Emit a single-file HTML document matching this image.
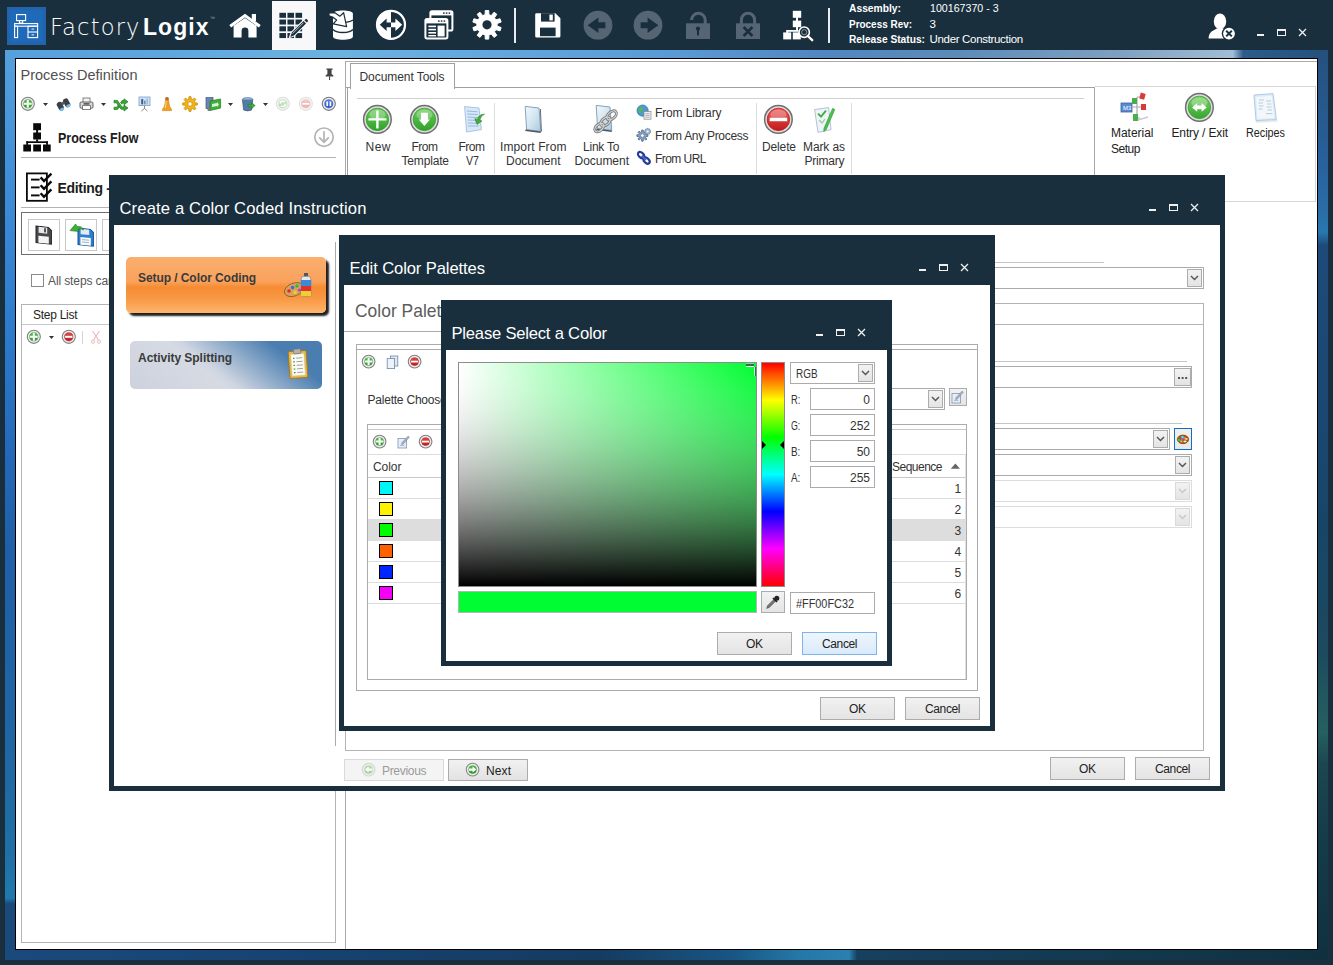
<!DOCTYPE html>
<html lang="en"><head><meta charset="utf-8"><title>FactoryLogix</title>
<style>
html,body{margin:0;padding:0}
body{width:1333px;height:965px;position:relative;overflow:hidden;background:#1a2f3e;font-family:"Liberation Sans",sans-serif;font-size:12px}
div,span,svg{position:absolute;box-sizing:content-box}
.t{white-space:nowrap}
svg{overflow:visible}
</style></head>
<body>
<div style="left:5px;top:50px;width:1323px;height:9px;background:linear-gradient(90deg,#56a0dc 0%,#5fa6de 12%,#6db3e0 25%,#62a6dc 38%,#5b9bd5 50%,#5187c0 62%,#5d8bb8 72%,#7ea0c0 84%,#a2bdd4 92.8%,#2d5c8a 93.6%,#25507c 100%)"></div>
<div style="left:5px;top:50px;width:11px;height:910px;background:linear-gradient(180deg,#56a0dc 0%,#3f8ed8 14%,#2f7fcf 28%,#2368b8 45%,#1f5fa8 55%,#1f66a4 75%,#1f6fa6 88%,#2079ad 93.2%,#1a4a7c 93.8%,#1a4a7c 100%)"></div>
<div style="left:1317px;top:50px;width:11px;height:910px;background:linear-gradient(180deg,#25507c 0%,#28609a 12%,#2a6ea6 18%,#2878b0 20%,#1d4a78 21.5%,#1b4872 40%,#184566 52%,#1d4a5e 66%,#256060 75%,#1c4650 78.5%,#153a48 88%,#10303f 100%)"></div>
<div style="left:5px;top:949px;width:1323px;height:11px;background:linear-gradient(90deg,#1a4a7c 0%,#164270 25%,#153b60 45%,#185684 55%,#2478a8 60%,#2a80b0 63.8%,#17405e 64.4%,#143a52 80%,#10303f 100%)"></div>
<div style="left:15px;top:58px;width:1301px;height:890px;border:1px solid #000;background:#fff"></div>
<div style="left:7px;top:7px;width:39px;height:38px;background:#2363ab"></div>
<div style="left:10px;top:10px;width:33px;height:32px;background:#1e6ab8"></div>
<svg style="left:7px;top:7px;" width="39" height="38" viewBox="0 0 39 38"><g fill="none" stroke="#fff" stroke-width="1.1">
<rect x="9.6" y="7.6" width="9" height="6"/><path d="M12.5 13.6v2.4h3.2v-2.4"/>
<rect x="7.6" y="16.6" width="23" height="2.6"/>
<rect x="7.6" y="19.2" width="3" height="11.4"/>
<rect x="21" y="19.2" width="9.6" height="11.4"/><path d="M21 25h9.6"/></g>
<rect x="24.5" y="21.5" width="2.6" height="1.2" fill="#cfe0f4"/><rect x="24.5" y="27.2" width="2.6" height="1.2" fill="#cfe0f4"/></svg>
<span class="t" style="left:50px;top:14px;font-size:22.6px;line-height:26px;color:#fff;letter-spacing:1.158px;font-family:'DejaVu Sans','Liberation Sans',sans-serif;font-weight:200;">Factory</span>
<span class="t" style="left:143px;top:14px;font-size:23px;line-height:26px;font-weight:bold;color:#fff;letter-spacing:1.043px;">Logix</span>
<span class="t" style="left:210px;top:15px;font-size:5px;line-height:6px;color:#9ab;">™</span>
<svg style="left:228px;top:10px;" width="34" height="30" viewBox="0 0 34 30"><path d="M2.2 16.2 L17 5.6 L31.8 16.2" fill="none" stroke="#fff" stroke-width="3"/>
<rect x="23.8" y="4" width="4.2" height="7" fill="#fff"/>
<path d="M5.6 15.8 L17 8 L28.6 15.8 V27.6 H20.4 V21 a3.4 3.4 0 0 0 -6.8 0 V27.6 H5.6Z" fill="#fff"/></svg>
<div style="left:272px;top:1px;width:44px;height:49px;background:#f8f8fa"></div>
<svg style="left:272px;top:1px;" width="44" height="49" viewBox="0 0 44 49"><rect x="7.40" y="11.80" width="6.6" height="5" fill="#1a2f3e"/><rect x="15.45" y="11.80" width="6.6" height="5" fill="#1a2f3e"/><rect x="23.50" y="11.80" width="6.6" height="5" fill="#1a2f3e"/><rect x="7.40" y="18.55" width="6.6" height="5" fill="#1a2f3e"/><rect x="15.45" y="18.55" width="6.6" height="5" fill="#1a2f3e"/><rect x="23.50" y="18.55" width="6.6" height="5" fill="#1a2f3e"/><rect x="7.40" y="25.30" width="6.6" height="5" fill="#1a2f3e"/><rect x="15.45" y="25.30" width="6.6" height="5" fill="#1a2f3e"/><rect x="23.50" y="25.30" width="6.6" height="5" fill="#1a2f3e"/><rect x="7.40" y="32.05" width="6.6" height="5" fill="#1a2f3e"/><rect x="15.45" y="32.05" width="6.6" height="5" fill="#1a2f3e"/><rect x="23.50" y="32.05" width="6.6" height="5" fill="#1a2f3e"/><path d="M16.5 37.5 L18.6 31.2 L32.2 17.8 L36.2 21.8 L22.6 35.2 Z" fill="#f8f8fa"/>
<path d="M18.3 36 L19.9 31.6 L31.6 20 L34 22.4 L22.3 34.2 Z M32.4 19.2 L33.4 18.2 a1 1 0 0 1 1.4 0 L35.8 19.2 a1 1 0 0 1 0 1.4 L34.8 21.6Z" fill="#1a2f3e"/>
<path d="M20.6 32.6 L31.4 21.8" stroke="#f8f8fa" stroke-width=".7"/></svg>
<svg style="left:327px;top:8px;" width="30" height="34" viewBox="0 0 30 34"><path d="M6 5.6 C6 1.4 25.9 1.4 25.9 5.6 V28.4 C25.9 32.8 6 32.8 6 28.4Z" fill="#fff"/>
<path d="M6 21.4 C9 25.6 23 25.6 25.9 21.4" fill="none" stroke="#1a2f3e" stroke-width="1.6"/>
<path d="M17 14.4 C21 14.2 24 13.4 25.9 12" fill="none" stroke="#1a2f3e" stroke-width="1.3"/>
<path d="M2 4.9 L7.6 4.6 L12.8 8.2 L16.6 4.7 L19.6 18.6 L6.2 15.8 L9.6 12 L6.2 9.4 L2 7.9Z" fill="#fff" stroke="#1a2f3e" stroke-width="1.2" stroke-linejoin="round"/></svg>
<svg style="left:375px;top:9px;" width="32" height="32" viewBox="0 0 32 32"><circle cx="16" cy="15.8" r="14" fill="none" stroke="#fff" stroke-width="2.2"/>
<path d="M16 2 A13.8 13.8 0 0 0 16 29.6Z" fill="#fff"/>
<path d="M4.8 15.8 L11.6 9.6 V13.4 H16 V18.2 H11.6 V22Z" fill="#1a2f3e"/>
<path d="M27.2 15.8 L20.4 9.6 V13.4 H16 V18.2 H20.4 V22Z" fill="#fff"/></svg>
<svg style="left:423px;top:9px;" width="32" height="32" viewBox="0 0 32 32"><rect x="7.4" y="2.2" width="22" height="19.4" rx="1.6" fill="#1a2f3e" stroke="#fff" stroke-width="2"/>
<rect x="7.4" y="2.2" width="22" height="4.2" fill="#fff"/>
<rect x="2.4" y="10" width="22" height="19.4" rx="1.6" fill="#1a2f3e" stroke="#fff" stroke-width="2"/>
<rect x="2.4" y="10" width="22" height="4.4" fill="#fff"/>
<g fill="#1a2f3e"><rect x="20" y="3.4" width="1.6" height="1.4"/><rect x="22.8" y="3.4" width="1.6" height="1.4"/><rect x="25.6" y="3.4" width="1.6" height="1.4"/>
<rect x="15" y="11.4" width="1.6" height="1.4"/><rect x="17.8" y="11.4" width="1.6" height="1.4"/><rect x="20.6" y="11.4" width="1.6" height="1.4"/></g>
<g fill="#fff"><rect x="5.4" y="16.6" width="7.6" height="1.6"/><rect x="5.4" y="19.8" width="7.6" height="1.6"/><rect x="5.4" y="23" width="7.6" height="1.6"/><rect x="5.4" y="26" width="7.6" height="1.4"/><rect x="14.6" y="16.6" width="7" height="10.8"/></g></svg>
<svg style="left:471px;top:9px;" width="32" height="32" viewBox="0 0 32 32"><polygon points="14.07,5.78 14.28,1.50 17.72,1.50 17.93,5.78 20.33,6.56 23.01,3.22 25.80,5.25 23.45,8.83 24.93,10.87 29.06,9.74 30.13,13.02 26.12,14.54 26.12,17.06 30.13,18.58 29.06,21.86 24.93,20.73 23.45,22.77 25.80,26.35 23.01,28.38 20.33,25.04 17.93,25.82 17.72,30.10 14.28,30.10 14.07,25.82 11.67,25.04 8.99,28.38 6.20,26.35 8.55,22.77 7.07,20.73 2.94,21.86 1.87,18.58 5.88,17.06 5.88,14.54 1.87,13.02 2.94,9.74 7.07,10.87 8.55,8.83 6.20,5.25 8.99,3.22 11.67,6.56" fill="#fff" stroke="#fff" stroke-width="1" stroke-linejoin="round"/><circle cx="16" cy="15.8" r="4.6" fill="#1a2f3e"/></svg>
<div style="left:514px;top:8px;width:2px;height:35px;background:#e8ecf0"></div>
<svg style="left:534px;top:12px;" width="28" height="27" viewBox="0 0 28 27"><path d="M1.2 2.6 a1.4 1.4 0 0 1 1.4 -1.4 H21.4 L26.4 6.2 V24.2 a1.4 1.4 0 0 1 -1.4 1.4 H2.6 a1.4 1.4 0 0 1 -1.4 -1.4Z" fill="#fff"/>
<rect x="7" y="1.2" width="13.6" height="8.4" fill="#1a2f3e"/><rect x="15.4" y="2.6" width="3.4" height="5.8" fill="#fff"/>
<rect x="6" y="15.6" width="15.6" height="8.6" fill="#1a2f3e"/></svg>
<svg style="left:583px;top:10px;" width="30" height="30" viewBox="0 0 30 30"><circle cx="15" cy="15.2" r="14.4" fill="#566573"/><path d="M4.6 15.2 L15.4 7.4 V12.2 H22.4 V18.2 H15.4 V23Z" fill="#1a2f3e"/></svg>
<svg style="left:633px;top:10px;" width="30" height="30" viewBox="0 0 30 30"><circle cx="15" cy="15.2" r="14.4" fill="#566573"/><path d="M25.4 15.2 L14.6 7.4 V12.2 H7.6 V18.2 H14.6 V23Z" fill="#1a2f3e"/></svg>
<svg style="left:685px;top:10px;" width="26" height="30" viewBox="0 0 26 30"><path d="M6.6 10 a6.8 6.8 0 0 1 13.6 0 V14" fill="none" stroke="#566573" stroke-width="3"/>
<rect x="1" y="13.3" width="24" height="15.7" fill="#566573"/>
<circle cx="13" cy="18.6" r="2.2" fill="#1a2f3e"/><rect x="12" y="19" width="2" height="6.4" fill="#1a2f3e"/></svg>
<svg style="left:735px;top:10px;" width="26" height="30" viewBox="0 0 26 30"><path d="M6.4 14 V9.8 a6.6 6.6 0 0 1 13.2 0 V14" fill="none" stroke="#566573" stroke-width="3"/>
<rect x="1" y="13.3" width="24" height="15.7" fill="#566573"/>
<path d="M8.6 17 L17.4 26 M17.4 17 L8.6 26" stroke="#1a2f3e" stroke-width="2.6"/></svg>
<svg style="left:782px;top:9px;" width="32" height="33" viewBox="0 0 32 33"><g fill="#fff"><rect x="10.8" y="1.8" width="8.4" height="7"/><rect x="14" y="8" width="2" height="4"/><rect x="10.8" y="11.6" width="8.4" height="6.6"/><rect x="14" y="18" width="2" height="4"/>
<rect x="4.4" y="21" width="12" height="1.8"/><rect x="4.4" y="21" width="1.8" height="3"/>
<rect x="1.2" y="23.4" width="8" height="7"/><rect x="10.8" y="23.4" width="8" height="7"/></g>
<circle cx="22.2" cy="23.2" r="5.2" fill="#1a2f3e" stroke="#fff" stroke-width="1.6"/><circle cx="22.2" cy="23.2" r="2.6" fill="none" stroke="#fff" stroke-width=".8" opacity=".6"/>
<path d="M25.8 27 L30.2 31.2" stroke="#fff" stroke-width="2.4" stroke-linecap="round"/></svg>
<div style="left:828px;top:8px;width:2px;height:35px;background:#e8ecf0"></div>
<span class="t" style="left:849px;top:2px;font-size:11.5px;line-height:12px;font-weight:bold;color:#fff;transform:scaleX(0.8940);transform-origin:0 0;">Assembly:</span>
<span class="t" style="left:849px;top:18px;font-size:11.5px;line-height:12px;font-weight:bold;color:#fff;transform:scaleX(0.8645);transform-origin:0 0;">Process Rev:</span>
<span class="t" style="left:849px;top:33px;font-size:11.5px;line-height:12px;font-weight:bold;color:#fff;transform:scaleX(0.8873);transform-origin:0 0;">Release Status:</span>
<span class="t" style="left:929.5px;top:2px;font-size:11.5px;line-height:12px;color:#fff;transform:scaleX(0.9248);transform-origin:0 0;">100167370 - 3</span>
<span class="t" style="left:929.5px;top:18px;font-size:11.5px;line-height:12px;color:#fff;">3</span>
<span class="t" style="left:929.5px;top:33px;font-size:11.5px;line-height:12px;color:#fff;letter-spacing:-0.322px;">Under Construction</span>
<svg style="left:1207px;top:12px;" width="32" height="30" viewBox="0 0 32 30"><ellipse cx="13" cy="9.4" rx="6.2" ry="8" fill="#fff"/>
<path d="M1.6 26.6 C1.6 19 7 18.6 9.6 16.4 H16.4 C19 18.6 24.4 19 24.4 26.6Z" fill="#fff"/>
<circle cx="22" cy="21.6" r="6.6" fill="#fff" stroke="#1a2f3e" stroke-width="1.4"/>
<path d="M19.2 18.8 L24.8 24.4 M24.8 18.8 L19.2 24.4" stroke="#1a2f3e" stroke-width="2"/></svg>
<div style="left:1257px;top:34px;width:7px;height:2px;background:#f0f0f0"></div>
<div style="left:1277px;top:29px;width:7px;height:4px;border:1px solid #f0f0f0;border-top-width:2px"></div>
<svg style="left:1298px;top:28px;" width="9" height="9" viewBox="0 0 9 9"><path d="M1 1 L8 8 M8 1 L1 8" stroke="#f0f0f0" stroke-width="1.3"/></svg>
<span class="t" style="left:20.5px;top:67px;font-size:14.5px;line-height:16px;color:#505050;letter-spacing:0.008px;">Process Definition</span>
<svg style="left:324px;top:67px;" width="11" height="14" viewBox="0 0 11 14"><path d="M2.4 1.6 H8.6 V2.8 H7.6 V7 L9.4 8.6 V9.4 H1.6 V8.6 L3.4 7 V2.8 H2.4Z" fill="#444"/><rect x="5" y="9.4" width="1.1" height="3.6" fill="#444"/></svg>
<svg style="left:20.0px;top:96.2px;" width="15.6" height="15.6" viewBox="0 0 15.6 15.6"><defs><linearGradient id="g278_1040" x1="0" y1="0" x2="0" y2="1"><stop offset="0" stop-color="#58c04e"/><stop offset="1" stop-color="#2c9a26"/></linearGradient></defs><circle cx="7.8" cy="7.8" r="6.55" fill="#ececec" stroke="#808080" stroke-width="1.1"/><circle cx="7.8" cy="7.8" r="4.08" fill="url(#g278_1040)" stroke="#2c9a26" stroke-width=".6"/><path d="M3.92 7.8 H11.68 M7.8 3.92 V11.68" stroke="#fff" stroke-width="2.00"/></svg>
<svg style="left:42.5px;top:102.5px;" width="5" height="3" viewBox="0 0 5 3"><path d="M0 0 H5 L2.5 3Z" fill="#333"/></svg>
<svg style="left:56px;top:97px;" width="15" height="14" viewBox="0 0 15 14"><g transform="rotate(-28 7.5 7)"><rect x="1" y="3" width="5.4" height="9" rx="2.4" fill="#3a3f48"/><rect x="8.2" y="3" width="5.4" height="9" rx="2.4" fill="#3a3f48"/><rect x="5.6" y="4.6" width="3.4" height="3" fill="#555"/>
<ellipse cx="3.7" cy="11" rx="2.4" ry="1.5" fill="#7ab8e8"/><ellipse cx="10.9" cy="11" rx="2.4" ry="1.5" fill="#7ab8e8"/></g></svg>
<svg style="left:79px;top:97px;" width="15" height="14" viewBox="0 0 15 14"><rect x="4" y="1" width="7" height="4.6" fill="#f4f4f4" stroke="#666" stroke-width=".8"/><rect x="1" y="5" width="13" height="6.2" rx="1.2" fill="#d8d8dc" stroke="#555" stroke-width=".9"/><rect x="3.6" y="8.6" width="7.8" height="4" fill="#fff" stroke="#666" stroke-width=".8"/><rect x="4.6" y="6.2" width="5.8" height="1.4" fill="#444"/></svg>
<svg style="left:100.5px;top:102.5px;" width="5" height="3" viewBox="0 0 5 3"><path d="M0 0 H5 L2.5 3Z" fill="#333"/></svg>
<svg style="left:113px;top:96px;" width="16" height="16" viewBox="0 0 16 16"><path d="M1 4.4 H4.4 L9 11 H11 V9 L15 12 L11 15 V13.2 H8 L3.4 6.8 H1Z M1 11.2 H3.6 L5 9.4 L6.4 11.2 L4.4 13.6 H1Z M7.6 6.6 L9 4.6 H11 V2.8 L15 5.8 L11 8.8 V7 H9.6 L8.8 8.2Z" fill="#3aa836" stroke="#1c7a1c" stroke-width=".7"/></svg>
<svg style="left:138px;top:96px;" width="13" height="16" viewBox="0 0 13 16"><rect x="1" y="1" width="11" height="8.6" fill="#cfe4f6" stroke="#7d9ec0" stroke-width=".8"/><rect x="3.2" y="3" width="2" height="5.4" fill="#3f5f86"/><rect x="6" y="4.6" width="1.6" height="3.8" fill="#6b8db8"/><rect x="8.4" y="2.4" width="1.6" height="6" fill="#9cb9d8"/><path d="M6.5 9.6 V13 M6.5 12.4 L3.4 15.2 M6.5 12.4 L9.6 15.2" stroke="#8a8a8a" stroke-width="1"/></svg>
<svg style="left:161px;top:96px;" width="12" height="16" viewBox="0 0 12 16"><circle cx="6" cy="2.8" r="1.9" fill="#b8691c"/><path d="M4.6 4 H7.4 L8.6 10.4 L10.6 13.4 V14.6 H1.4 V13.4 L3.4 10.4Z" fill="#f0a020" stroke="#c77810" stroke-width=".6"/><path d="M5.2 5 L4.4 12" stroke="#ffd98a" stroke-width="1"/></svg>
<svg style="left:182px;top:96px;" width="16" height="16" viewBox="0 0 16 16"><polygon points="13.05,6.76 15.33,6.97 15.33,9.03 13.05,9.24 12.45,10.70 13.91,12.45 12.45,13.91 10.70,12.45 9.24,13.05 9.03,15.33 6.97,15.33 6.76,13.05 5.30,12.45 3.55,13.91 2.09,12.45 3.55,10.70 2.95,9.24 0.67,9.03 0.67,6.97 2.95,6.76 3.55,5.30 2.09,3.55 3.55,2.09 5.30,3.55 6.76,2.95 6.97,0.67 9.03,0.67 9.24,2.95 10.70,3.55 12.45,2.09 13.91,3.55 12.45,5.30" fill="#f2b418" stroke="#c48a08" stroke-width=".8" stroke-linejoin="round"/><circle cx="8" cy="8" r="2.2" fill="#fff" stroke="#c48a08" stroke-width=".7"/></svg>
<svg style="left:205px;top:96px;" width="17" height="16" viewBox="0 0 17 16"><rect x="1" y="1.6" width="7" height="11" fill="#6a86ac" stroke="#3d5a80" stroke-width=".7"/><path d="M5 5 L15.6 3 V12 L5 14.6Z" fill="#3fae3a" stroke="#1f7a1f" stroke-width=".7"/><path d="M7 8 L12 7 V6 L14 8.4 L12 11 V10 L7 11Z" fill="#d6f5d0"/><circle cx="4" cy="13.4" r="1.6" fill="#777"/></svg>
<svg style="left:227.5px;top:102.5px;" width="5" height="3" viewBox="0 0 5 3"><path d="M0 0 H5 L2.5 3Z" fill="#333"/></svg>
<svg style="left:241px;top:96px;" width="15" height="16" viewBox="0 0 15 16"><ellipse cx="6.6" cy="3.4" rx="5.2" ry="1.8" fill="#9fc2e6" stroke="#4f6f92" stroke-width=".7"/><path d="M1.4 3.6 L2.6 14 Q6.6 15.8 10.6 14 L11.8 3.6" fill="#547aa6" stroke="#3a5878" stroke-width=".7"/><path d="M7 8.4 H10.6 V6.6 L14.2 9.6 L10.6 12.6 V10.8 H7Z" fill="#3fae3a" stroke="#1f7a1f" stroke-width=".5"/></svg>
<svg style="left:262.5px;top:102.5px;" width="5" height="3" viewBox="0 0 5 3"><path d="M0 0 H5 L2.5 3Z" fill="#333"/></svg>
<svg style="left:275.2px;top:96.2px;opacity:0.55;" width="15.6" height="15.6" viewBox="0 0 15.6 15.6"><defs><linearGradient id="g2830_1040" x1="0" y1="0" x2="0" y2="1"><stop offset="0" stop-color="#9fdc98"/><stop offset="1" stop-color="#74c06e"/></linearGradient></defs><circle cx="7.8" cy="7.8" r="6.55" fill="#ececec" stroke="#c4c4c4" stroke-width="1.1"/><circle cx="7.8" cy="7.8" r="4.08" fill="url(#g2830_1040)" stroke="#74c06e" stroke-width=".6"/><circle cx="7.8" cy="7.8" r="2.71" fill="none" stroke="#fff" stroke-width="1.60" stroke-dasharray="6.20 2.33"/></svg>
<svg style="left:298.2px;top:96.2px;opacity:0.5;" width="15.6" height="15.6" viewBox="0 0 15.6 15.6"><defs><linearGradient id="g3060_1040" x1="0" y1="0" x2="0" y2="1"><stop offset="0" stop-color="#f29a9a"/><stop offset="1" stop-color="#e06a6a"/></linearGradient></defs><circle cx="7.8" cy="7.8" r="6.55" fill="#ececec" stroke="#c4c4c4" stroke-width="1.1"/><circle cx="7.8" cy="7.8" r="4.08" fill="url(#g3060_1040)" stroke="#e06a6a" stroke-width=".6"/><rect x="3.92" y="6.60" width="7.75" height="2.40" fill="#fff" stroke="#b33" stroke-width=".4"/></svg>
<svg style="left:321.2px;top:96.2px;" width="15.6" height="15.6" viewBox="0 0 15.6 15.6"><defs><linearGradient id="g3290_1040" x1="0" y1="0" x2="0" y2="1"><stop offset="0" stop-color="#5a86e8"/><stop offset="1" stop-color="#2a52c8"/></linearGradient></defs><circle cx="7.8" cy="7.8" r="6.55" fill="#ececec" stroke="#777" stroke-width="1.1"/><circle cx="7.8" cy="7.8" r="4.08" fill="url(#g3290_1040)" stroke="#2a52c8" stroke-width=".6"/><rect x="5.40" y="5.47" width="1.63" height="4.65" fill="#fff"/><rect x="8.58" y="5.47" width="1.63" height="4.65" fill="#fff"/></svg>
<svg style="left:23px;top:122.5px;" width="28" height="29" viewBox="0 0 28 29"><g fill="#0a0a0a"><rect x="10.2" y="0.2" width="7.8" height="7"/><rect x="13.1" y="7" width="2" height="3"/><rect x="10.2" y="9.5" width="7.8" height="7"/><rect x="13.1" y="16.3" width="2" height="2.4"/>
<rect x="3.3" y="18.3" width="21.6" height="1.7"/><rect x="3.3" y="18.3" width="1.8" height="3.6"/><rect x="23.1" y="18.3" width="1.8" height="3.6"/>
<rect x="0.3" y="21.5" width="7.7" height="7"/><rect x="10.2" y="21.5" width="7.8" height="7"/><rect x="20" y="21.5" width="7.7" height="7"/></g></svg>
<span class="t" style="left:57.5px;top:130px;font-size:14px;line-height:16px;font-weight:bold;color:#1c1c1c;transform:scaleX(0.8919);transform-origin:0 0;">Process Flow</span>
<svg style="left:313px;top:127px;" width="22" height="21" viewBox="0 0 22 21"><circle cx="11" cy="10.2" r="9.2" fill="#fff" stroke="#b4b4b4" stroke-width="1.7"/><path d="M11 4.2 V15 M6.2 10.4 L11 15.2 L15.8 10.4" fill="none" stroke="#b4b4b4" stroke-width="1.7"/></svg>
<div style="left:21px;top:157px;width:315px;height:1px;background:#b4b4b4"></div>
<svg style="left:25px;top:172px;" width="28" height="31" viewBox="0 0 28 31"><rect x="1.9" y="1.4" width="20" height="27.4" fill="#fff" stroke="#0a0a0a" stroke-width="1.8"/>
<g stroke="#0a0a0a" stroke-width="1.9" fill="none"><path d="M6 7.6 H14.6"/><path d="M6 15.4 H14.6"/><path d="M6 23.4 H14.6"/>
<path d="M15.6 5.4 L19 9 L26.4 1.6" stroke-width="2.4"/><path d="M15.6 13.2 L19 16.8 L26.4 9.4" stroke-width="2.4"/><path d="M15.6 21.2 L19 24.8 L26.4 17.4" stroke-width="2.4"/></g></svg>
<span class="t" style="left:57.5px;top:180px;font-size:14px;line-height:16px;font-weight:bold;color:#1c1c1c;letter-spacing:-0.311px;">Editing -</span>
<div style="left:21px;top:207px;width:315px;height:1px;background:#b4b4b4"></div>
<div style="left:21px;top:212px;width:313px;height:41px;border:1px solid #6e6e6e;background:#fff;"></div>
<div style="left:28px;top:219px;width:30px;height:30px;border:1px solid #c8c8c8;background:#fff;"></div>
<div style="left:65px;top:219px;width:30px;height:30px;border:1px solid #c8c8c8;background:#fff;"></div>
<div style="left:102px;top:219px;width:30px;height:30px;border:1px solid #c8c8c8;background:#fff;"></div>
<svg style="left:35px;top:225px;" width="19" height="21" viewBox="0 0 19 21"><g transform="skewY(6)"><path d="M1 1 H13.4 L16.4 3.6 V17.4 H1Z" fill="#4a4a4e" stroke="#222" stroke-width="1"/><rect x="3.6" y="1.4" width="8.6" height="6" fill="#e8e8ec"/><rect x="9" y="2.2" width="2" height="4.2" fill="#555"/><rect x="3.4" y="10.4" width="10.4" height="7" fill="#f4f4f4"/></g></svg>
<svg style="left:69px;top:222px;" width="26" height="26" viewBox="0 0 26 26"><g transform="translate(8 5) skewY(6)"><path d="M1 1 H13.4 L16.4 3.6 V17.4 H1Z" fill="#2f7fd0" stroke="#1a4f90" stroke-width="1"/><rect x="3.6" y="1.4" width="8.6" height="5.4" fill="#dfeaf6"/><rect x="3.4" y="9.6" width="10.4" height="7.8" fill="#f4f8fc"/><path d="M5 12 H12 M5 14.4 H12" stroke="#9ab" stroke-width=".8"/></g>
<path d="M1 8.6 L6.6 2 L8 4.6 Q13 3.6 14.6 8 Q11.6 6.2 9 7.2 L10 9.6Z" fill="#3fae3a" stroke="#1f7a1f" stroke-width=".6"/></svg>
<div style="left:31px;top:274px;width:11px;height:11px;border:1px solid #8a8a8a;background:#fff;"></div>
<span class="t" style="left:48px;top:274px;font-size:12px;line-height:14px;color:#555;letter-spacing:-0.110px;">All steps can be performed</span>
<div style="left:21px;top:304px;width:313px;height:637px;border:1px solid #b4b4b4;background:#fff;"></div>
<span class="t" style="left:33px;top:308px;font-size:12px;line-height:14px;color:#222;letter-spacing:-0.274px;">Step List</span>
<div style="left:22px;top:324px;width:313px;height:1px;background:#c8c8c8"></div>
<svg style="left:25.999999999999996px;top:329.2px;" width="15.6" height="15.6" viewBox="0 0 15.6 15.6"><defs><linearGradient id="g338_3370" x1="0" y1="0" x2="0" y2="1"><stop offset="0" stop-color="#58c04e"/><stop offset="1" stop-color="#2c9a26"/></linearGradient></defs><circle cx="7.8" cy="7.8" r="6.55" fill="#ececec" stroke="#808080" stroke-width="1.1"/><circle cx="7.8" cy="7.8" r="4.08" fill="url(#g338_3370)" stroke="#2c9a26" stroke-width=".6"/><path d="M3.92 7.8 H11.68 M7.8 3.92 V11.68" stroke="#fff" stroke-width="2.00"/></svg>
<svg style="left:48.5px;top:335.5px;" width="5" height="3" viewBox="0 0 5 3"><path d="M0 0 H5 L2.5 3Z" fill="#333"/></svg>
<svg style="left:61.2px;top:329.2px;" width="15.6" height="15.6" viewBox="0 0 15.6 15.6"><defs><linearGradient id="g690_3370" x1="0" y1="0" x2="0" y2="1"><stop offset="0" stop-color="#e84a4a"/><stop offset="1" stop-color="#c01818"/></linearGradient></defs><circle cx="7.8" cy="7.8" r="6.55" fill="#ececec" stroke="#808080" stroke-width="1.1"/><circle cx="7.8" cy="7.8" r="4.08" fill="url(#g690_3370)" stroke="#c01818" stroke-width=".6"/><rect x="3.92" y="6.60" width="7.75" height="2.40" fill="#fff" stroke="#b33" stroke-width=".4"/></svg>
<div style="left:82px;top:331px;width:1px;height:13px;background:#d4d4d4"></div>
<svg style="left:90px;top:330px;" width="12" height="14" viewBox="0 0 12 14"><path d="M2.6 1 L8.4 10 M9.4 1 L3.6 10" stroke="#e8b8b8" stroke-width="1.1"/><circle cx="3" cy="11.6" r="1.6" fill="none" stroke="#e8b8b8" stroke-width="1"/><circle cx="9" cy="11.6" r="1.6" fill="none" stroke="#e8b8b8" stroke-width="1"/></svg>
<div style="left:345px;top:61px;width:971px;height:887px;border:1px solid #aaa;border-bottom:none;border-right:none;background:#fff"></div>
<div style="left:346px;top:87px;width:749px;height:1px;background:#a0a0a0"></div>
<div style="left:347px;top:87px;width:1px;height:115px;background:#a0a0a0"></div>
<div style="left:350px;top:63px;width:103px;height:25px;border:1px solid #a0a0a0;border-bottom:none;background:#fff"></div>
<span class="t" style="left:359.5px;top:70px;font-size:12px;line-height:14px;color:#333;letter-spacing:-0.063px;">Document Tools</span>
<div style="left:357px;top:98px;width:727px;height:1px;background:#d0d0d0"></div>
<svg style="left:361.8px;top:103.89999999999999px;" width="30.8" height="30.8" viewBox="0 0 30.8 30.8"><defs><linearGradient id="g3772_1193" x1="0" y1="0" x2="0" y2="1"><stop offset="0" stop-color="#6ccc5c"/><stop offset="1" stop-color="#2fa22a"/></linearGradient></defs><circle cx="15.4" cy="15.4" r="13.80" fill="#dedede" stroke="#6e6e6e" stroke-width="1.5"/><circle cx="15.4" cy="15.4" r="11.23" fill="url(#g3772_1193)" stroke="#2fa22a" stroke-width=".8"/><ellipse cx="15.4" cy="10.68" rx="8.09" ry="5.17" fill="#fff" opacity=".28"/><path d="M6.41 15.4 H24.39 M15.4 6.41 V24.39" stroke="#fff" stroke-width="2.40"/></svg>
<span class="t" style="left:365.5px;top:140px;font-size:12px;line-height:14px;color:#333;letter-spacing:0.497px;">New</span>
<svg style="left:409.1px;top:103.89999999999999px;" width="30.8" height="30.8" viewBox="0 0 30.8 30.8"><defs><linearGradient id="g4245_1193" x1="0" y1="0" x2="0" y2="1"><stop offset="0" stop-color="#6ccc5c"/><stop offset="1" stop-color="#2fa22a"/></linearGradient></defs><circle cx="15.4" cy="15.4" r="13.80" fill="#dedede" stroke="#6e6e6e" stroke-width="1.5"/><circle cx="15.4" cy="15.4" r="11.23" fill="url(#g4245_1193)" stroke="#2fa22a" stroke-width=".8"/><ellipse cx="15.4" cy="10.68" rx="8.09" ry="5.17" fill="#fff" opacity=".28"/><path d="M11.94 8.78 H18.86 V15.40 H21.02 L15.4 22.02 L9.78 15.4 H11.94Z" fill="#fff"/></svg>
<span class="t" style="left:411.5px;top:140px;font-size:12px;line-height:14px;color:#333;letter-spacing:-0.499px;">From</span>
<span class="t" style="left:401.5px;top:154px;font-size:12px;line-height:14px;color:#333;letter-spacing:-0.170px;">Template</span>
<svg style="left:462px;top:105px;" width="24" height="29" viewBox="0 0 24 29"><path d="M2.6 1.6 L17 3 L19.4 24.6 L4.6 27Z" fill="#d8e8f8" stroke="#9ab8dc" stroke-width=".8"/><path d="M5 6 L15.6 6.8 M5.2 9 L15.8 9.6 M5.4 12 L16 12.6 M5.6 15 L16.2 15.4 M5.8 18 L16.6 18.2 M6 21 L16.8 21" stroke="#8fb2dc" stroke-width=".9"/>
<path d="M22.6 9 Q16 9.6 15.4 14.4 L12.8 13.6 L15 19.4 L20 16 L17.6 15.2 Q18.4 11.6 22.6 9Z" fill="#3fae3a" stroke="#1f7a1f" stroke-width=".5"/></svg>
<span class="t" style="left:458.5px;top:140px;font-size:12px;line-height:14px;color:#333;letter-spacing:-0.499px;">From</span>
<span class="t" style="left:466px;top:154px;font-size:12px;line-height:14px;color:#333;transform:scaleX(0.8857);transform-origin:0 0;">V7</span>
<div style="left:494px;top:103px;width:1px;height:71px;background:#dcdcdc"></div>
<svg style="left:522px;top:105px;" width="22" height="30" viewBox="0 0 22 30"><defs><linearGradient id="dg1" x1="0" y1="0" x2="1" y2="1"><stop offset="0" stop-color="#f2f8fc"/><stop offset=".5" stop-color="#d4e6f0"/><stop offset="1" stop-color="#a8c8dc"/></linearGradient></defs><path d="M3.2 1.4 L17 3 L18.8 26.4 L4.6 24.6Z" fill="url(#dg1)" stroke="#7a98b0" stroke-width=".9"/><path d="M3.4 25.2 L18.8 27.2" stroke="#4a5866" stroke-width="1.6"/><path d="M18.4 4 L19.4 26.6" stroke="#5a6c7c" stroke-width="1"/></svg>
<span class="t" style="left:500px;top:140px;font-size:12px;line-height:14px;color:#333;letter-spacing:0.116px;">Import From</span>
<span class="t" style="left:506px;top:154px;font-size:12px;line-height:14px;color:#333;letter-spacing:-0.027px;">Document</span>
<svg style="left:590px;top:104px;" width="30" height="31" viewBox="0 0 30 31"><path d="M6.2 1.4 L20 3 L21.8 26.4 L7.6 24.6Z" fill="url(#dg1)" stroke="#7a98b0" stroke-width=".9"/><path d="M6.4 25.2 L21.8 27.2" stroke="#4a5866" stroke-width="1.4"/>
<g fill="none" stroke="#808080" stroke-width="3"><ellipse cx="21.6" cy="11.4" rx="5.6" ry="3.4" transform="rotate(-42 21.6 11.4)"/><ellipse cx="15.4" cy="17.6" rx="5.6" ry="3.4" transform="rotate(-42 15.4 17.6)"/><ellipse cx="9.2" cy="23.6" rx="5.2" ry="3.2" transform="rotate(-42 9.2 23.6)"/></g>
<g fill="none" stroke="#d8d8d8" stroke-width="1.1"><ellipse cx="21.6" cy="11.4" rx="5.6" ry="3.4" transform="rotate(-42 21.6 11.4)"/><ellipse cx="15.4" cy="17.6" rx="5.6" ry="3.4" transform="rotate(-42 15.4 17.6)"/><ellipse cx="9.2" cy="23.6" rx="5.2" ry="3.2" transform="rotate(-42 9.2 23.6)"/></g></svg>
<span class="t" style="left:583px;top:140px;font-size:12px;line-height:14px;color:#333;letter-spacing:-0.217px;">Link To</span>
<span class="t" style="left:574.5px;top:154px;font-size:12px;line-height:14px;color:#333;letter-spacing:-0.027px;">Document</span>
<svg style="left:636px;top:104px;" width="16" height="16" viewBox="0 0 16 16"><circle cx="6.6" cy="6.6" r="5.6" fill="#4a9ad8" stroke="#2a6aa8" stroke-width=".7"/><path d="M3 4 Q5 2.4 7 3.6 Q8 5.4 6 6.6 Q4 7.6 4.6 10 Q2 8 3 4Z M8.6 7 Q10.6 6.4 11 8.4 Q9.6 10.6 8 10Z" fill="#58b848"/><rect x="8" y="7.6" width="7" height="7.6" fill="#f0f0f0" stroke="#888" stroke-width=".7"/><path d="M9.4 9.6 H13.6 M9.4 11.4 H13.6 M9.4 13.2 H13.6" stroke="#999" stroke-width=".7"/></svg>
<span class="t" style="left:655px;top:106px;font-size:12px;line-height:14px;color:#333;letter-spacing:-0.137px;">From Library</span>
<svg style="left:636px;top:127px;" width="16" height="16" viewBox="0 0 16 16"><polygon points="10.09,7.70 11.95,7.82 11.95,9.38 10.09,9.50 9.65,10.57 10.87,11.97 9.77,13.07 8.37,11.85 7.30,12.29 7.18,14.15 5.62,14.15 5.50,12.29 4.43,11.85 3.03,13.07 1.93,11.97 3.15,10.57 2.71,9.50 0.85,9.38 0.85,7.82 2.71,7.70 3.15,6.63 1.93,5.23 3.03,4.13 4.43,5.35 5.50,4.91 5.62,3.05 7.18,3.05 7.30,4.91 8.37,5.35 9.77,4.13 10.87,5.23 9.65,6.63" fill="#8aa4c0" stroke="#4a6488" stroke-width=".8"/><circle cx="6.4" cy="8.6" r="1.8" fill="#fff" stroke="#4a6488" stroke-width=".6"/><circle cx="11.6" cy="4.4" r="3" fill="#9ab4d0" stroke="#4a6488" stroke-width=".8" stroke-dasharray="1.4 .8"/><circle cx="11.6" cy="4.4" r="1" fill="#fff"/></svg>
<span class="t" style="left:655px;top:129px;font-size:12px;line-height:14px;color:#333;letter-spacing:-0.302px;">From Any Process</span>
<svg style="left:636px;top:150px;" width="16" height="16" viewBox="0 0 16 16"><g fill="none" stroke="#243a9a" stroke-width="2.2"><ellipse cx="5" cy="5" rx="3.6" ry="2.4" transform="rotate(45 5 5)"/><ellipse cx="10.6" cy="10.6" rx="3.6" ry="2.4" transform="rotate(45 10.6 10.6)"/></g><path d="M5.6 5.6 L10 10" stroke="#4a64c8" stroke-width="2"/></svg>
<span class="t" style="left:655px;top:152px;font-size:12px;line-height:14px;color:#333;letter-spacing:-0.548px;">From URL</span>
<div style="left:756px;top:103px;width:1px;height:71px;background:#dcdcdc"></div>
<svg style="left:763.1px;top:103.89999999999999px;" width="30.8" height="30.8" viewBox="0 0 30.8 30.8"><defs><linearGradient id="g7785_1193" x1="0" y1="0" x2="0" y2="1"><stop offset="0" stop-color="#ec5a5a"/><stop offset="1" stop-color="#c21a1a"/></linearGradient></defs><circle cx="15.4" cy="15.4" r="13.80" fill="#dedede" stroke="#6e6e6e" stroke-width="1.5"/><circle cx="15.4" cy="15.4" r="11.23" fill="url(#g7785_1193)" stroke="#c21a1a" stroke-width=".8"/><ellipse cx="15.4" cy="10.68" rx="8.09" ry="5.17" fill="#fff" opacity=".28"/><rect x="6.41" y="13.36" width="17.97" height="4.08" fill="#fff" stroke="#b33" stroke-width=".4"/></svg>
<span class="t" style="left:762px;top:140px;font-size:12px;line-height:14px;color:#333;letter-spacing:-0.138px;">Delete</span>
<svg style="left:812px;top:105px;" width="26" height="30" viewBox="0 0 26 30"><path d="M2.6 4.6 L16.6 2.6 L19 24.6 L6 27.4Z" fill="#eef4fa" stroke="#a8bcd0" stroke-width=".9"/><path d="M6 8.6 L9 11.6 L14 5.6" fill="none" stroke="#3fae3a" stroke-width="1.8"/><path d="M7 15 L10 18 L13 14" fill="none" stroke="#9ad08a" stroke-width="1.2"/>
<path d="M20.6 3.4 L22.8 4.4 L14.2 24.6 L11.8 26.6 L12 23.4Z" fill="#4cc44a" stroke="#2a8a2a" stroke-width=".6"/></svg>
<span class="t" style="left:803px;top:140px;font-size:12px;line-height:14px;color:#333;letter-spacing:-0.112px;">Mark as</span>
<span class="t" style="left:804.5px;top:154px;font-size:12px;line-height:14px;color:#333;letter-spacing:-0.222px;">Primary</span>
<div style="left:851px;top:103px;width:1px;height:71px;background:#dcdcdc"></div>
<div style="left:1095px;top:86px;width:220px;height:114px;border:1px solid #d6d6d6;border-left:none;background:#fff"></div>
<div style="left:1094px;top:87px;width:1px;height:115px;background:#a8a8a8"></div>
<svg style="left:1119px;top:91px;" width="30" height="32" viewBox="0 0 30 32"><rect x="2" y="12" width="11" height="9" fill="#5a8ad0" stroke="#3a62a0" stroke-width=".8"/><text x="4" y="19.4" font-size="6" fill="#fff" font-family="Liberation Sans,sans-serif">M3</text>
<path d="M13 16 H18 M18 6 V27 M18 6 H22 M18 16 H22 M18 27 H21" fill="none" stroke="#aaa" stroke-width="1.2"/>
<rect x="13" y="7" width="5" height="6" fill="#48b048"/><rect x="21" y="2" width="5" height="6" fill="#d83a3a" transform="rotate(15 23 5)"/><rect x="22" y="13" width="5" height="6" fill="#d83a3a"/><rect x="14" y="23" width="5" height="7" fill="#48b048"/><path d="M19 29 L29 26" stroke="#ccc" stroke-width="1.4"/></svg>
<span class="t" style="left:1111px;top:126px;font-size:12px;line-height:14px;color:#222;letter-spacing:-0.026px;">Material</span>
<span class="t" style="left:1111px;top:142px;font-size:12px;line-height:14px;color:#222;letter-spacing:-0.465px;">Setup</span>
<svg style="left:1183.6px;top:92.1px;" width="30.8" height="30.8" viewBox="0 0 30.8 30.8"><defs><linearGradient id="g11990_1075" x1="0" y1="0" x2="0" y2="1"><stop offset="0" stop-color="#7ad066"/><stop offset="1" stop-color="#35a62e"/></linearGradient></defs><circle cx="15.4" cy="15.4" r="13.80" fill="#dedede" stroke="#6e6e6e" stroke-width="1.5"/><circle cx="15.4" cy="15.4" r="11.23" fill="url(#g11990_1075)" stroke="#35a62e" stroke-width=".8"/><ellipse cx="15.4" cy="10.68" rx="8.09" ry="5.17" fill="#fff" opacity=".28"/><path d="M8.09 15.4 L13.21 11.01 V13.57 H17.59 V11.01 L22.71 15.4 L17.59 19.79 V17.23 H13.21 V19.79Z" fill="#fff"/></svg>
<span class="t" style="left:1171.5px;top:126px;font-size:12px;line-height:14px;color:#222;letter-spacing:-0.138px;">Entry / Exit</span>
<svg style="left:1252px;top:92px;" width="28" height="32" viewBox="0 0 28 32"><path d="M2 3 L21 1.6 L24.4 27.6 L4 28.6Z" fill="#dcecf8" stroke="#a8c4e0" stroke-width=".9"/><path d="M4 5 L19.6 3.8 L22.4 25.8 L5.6 26.8Z" fill="#f2f7fc"/><path d="M7 8 H12 M6.6 11 H11 M7 14 H11.6 M6.6 17 H10.6 M14 9 H19 M15 12 H19.4 M14.6 15 H19.6 M15.4 18 H20 M14 21.6 H20.6" stroke="#b8c4d0" stroke-width=".9"/><path d="M3 29 L24.8 28 L26 29.6 L4.6 30.8Z" fill="#d0d0d0" opacity=".5"/></svg>
<span class="t" style="left:1245.5px;top:126px;font-size:12px;line-height:14px;color:#222;transform:scaleX(0.8996);transform-origin:0 0;">Recipes</span>
<div style="left:109px;top:175px;width:1116px;height:616px;background:#1a2f3e"></div>
<div style="left:114px;top:225px;width:1106px;height:561px;background:#fff"></div>
<span class="t" style="left:119.5px;top:199px;font-size:16.6px;line-height:19px;color:#fff;letter-spacing:0.140px;">Create a Color Coded Instruction</span>
<div style="left:1149px;top:209px;width:7px;height:2px;background:#f0f0f0"></div>
<div style="left:1169px;top:204px;width:7px;height:4px;border:1px solid #f0f0f0;border-top-width:2px"></div>
<svg style="left:1190px;top:203px;" width="9" height="9" viewBox="0 0 9 9"><path d="M1 1 L8 8 M8 1 L1 8" stroke="#f0f0f0" stroke-width="1.3"/></svg>
<div style="left:126px;top:257px;width:200px;height:56px;border-radius:5px;background:linear-gradient(180deg,#fbae6e 0%,#faa866 22%,#f9a25c 44%,#f68c34 54%,#f89844 74%,#fdb66c 100%);box-shadow:3px 3px 2px rgba(0,0,0,.88)"></div>
<span class="t" style="left:138px;top:271px;font-size:12px;line-height:14px;font-weight:bold;color:#3a3a3a;letter-spacing:-0.070px;">Setup / Color Coding</span>
<svg style="left:283px;top:272px;" width="30" height="26" viewBox="0 0 30 26"><ellipse cx="11" cy="17.6" rx="10" ry="6.4" transform="rotate(-22 11 17.6)" fill="#d8a060" stroke="#8a5a20" stroke-width=".8"/>
<circle cx="6" cy="19" r="1.8" fill="#e02a2a"/><circle cx="9.6" cy="15.6" r="1.8" fill="#3a6ae0"/><circle cx="14" cy="14" r="1.8" fill="#38b838"/><circle cx="12" cy="20.4" r="1.8" fill="#e8d020"/><circle cx="16.6" cy="18" r="1.6" fill="#b040c0"/>
<rect x="21" y="1" width="4" height="3.4" fill="#555"/><path d="M19 4.4 H27 L28 8 V24 H18 V8Z" fill="#e8e8e8" stroke="#888" stroke-width=".7"/><rect x="18" y="8" width="10" height="6" fill="#3a8ad8"/><rect x="18" y="14" width="10" height="5" fill="#e03030"/><rect x="18" y="19" width="10" height="5" fill="#f0d030"/></svg>
<div style="left:130px;top:341px;width:192px;height:48px;border-radius:5px;background:linear-gradient(38deg,#ccd2de 0%,#d6dae3 38%,#d0d6e2 43%,#4a7eb0 79%,#4a7eb0 100%)"></div>
<span class="t" style="left:138px;top:351px;font-size:12px;line-height:14px;font-weight:bold;color:#3a3a3a;letter-spacing:-0.039px;">Activity Splitting</span>
<svg style="left:287px;top:348px;" width="22" height="32" viewBox="0 0 22 32"><g transform="rotate(-4 11 16)"><rect x="2" y="3" width="18" height="27" rx="1.6" fill="#e8b84a" stroke="#a87a18" stroke-width="1"/><rect x="4.4" y="6" width="13.2" height="21.6" fill="#fbfbf4" stroke="#c8c8b0" stroke-width=".5"/><rect x="7.4" y="1" width="7.2" height="4.6" rx="1" fill="#b0b0b0" stroke="#777" stroke-width=".7"/>
<path d="M6.4 10 H8 M6.4 13.6 H8 M6.4 17.2 H8 M6.4 20.8 H8 M6.4 24.4 H8" stroke="#3a9a3a" stroke-width="1.2"/><path d="M9.6 10 H15.6 M9.6 13.6 H15.6 M9.6 17.2 H15.6 M9.6 20.8 H15.6 M9.6 24.4 H15.6" stroke="#999" stroke-width=".9"/></g></svg>
<div style="left:335px;top:242px;width:1px;height:504px;background:#aaa"></div>
<div style="left:995px;top:262px;width:109px;height:1px;background:#c4c4c4"></div>
<div style="left:600px;top:267px;width:602px;height:20px;border:1px solid #ababab;background:#fff;"></div>
<div style="left:1187px;top:269px;width:13px;height:16px;border:1px solid #acacac;background:linear-gradient(#f2f2f2,#e4e4e4)"></div>
<svg style="left:1187px;top:269px;" width="15" height="18" viewBox="0 0 15 18"><path d="M4.0 7.0 L7.5 10.6 L11.0 7.0" fill="none" stroke="#555" stroke-width="1.4"/></svg>
<div style="left:345px;top:303px;width:857px;height:446px;border:1px solid #b4b4b4;background:#fff;"></div>
<div style="left:346px;top:324px;width:857px;height:1px;background:#b4b4b4"></div>
<div style="left:995px;top:361px;width:192px;height:1px;background:#c4c4c4"></div>
<div style="left:600px;top:366px;width:590px;height:20px;border:1px solid #ababab;background:#fff;"></div>
<div style="left:1174px;top:368px;width:15px;height:16px;border:1px solid #acacac;background:linear-gradient(#f2f2f2,#e4e4e4)"></div>
<svg style="left:1174px;top:368px;" width="17" height="18" viewBox="0 0 17 18"><rect x="4" y="9" width="2" height="2" fill="#555"/><rect x="7.6" y="9" width="2" height="2" fill="#555"/><rect x="11.2" y="9" width="2" height="2" fill="#555"/></svg>
<div style="left:995px;top:423px;width:187px;height:1px;background:#c4c4c4"></div>
<div style="left:600px;top:428px;width:568px;height:20px;border:1px solid #ababab;background:#fff;"></div>
<div style="left:1153px;top:430px;width:13px;height:16px;border:1px solid #acacac;background:linear-gradient(#f2f2f2,#e4e4e4)"></div>
<svg style="left:1153px;top:430px;" width="15" height="18" viewBox="0 0 15 18"><path d="M4.0 7.0 L7.5 10.6 L11.0 7.0" fill="none" stroke="#555" stroke-width="1.4"/></svg>
<div style="left:1174px;top:428px;width:16px;height:20px;border:1px solid #0c6fcd;background:linear-gradient(#f3efec,#e8e8e8)"></div>
<svg style="left:1176px;top:431px;" width="14" height="14" viewBox="0 0 14 14"><ellipse cx="7" cy="8.4" rx="5.6" ry="4.3" fill="#a85a12" stroke="#7a3c08" stroke-width=".7"/><rect x="2" y="8" width="2.2" height="2.2" fill="#10e030"/><rect x="5.4" y="5" width="2.2" height="2.2" fill="#40f0f0"/><rect x="5" y="7.4" width="2" height="2" fill="#b050f0"/><rect x="7.6" y="6.2" width="2" height="2" fill="#f070d0"/><rect x="9.4" y="7" width="2" height="2" fill="#f0e040"/><rect x="4.4" y="9.6" width="1.8" height="1.6" fill="#f0c0c0"/><ellipse cx="9" cy="10.4" rx="1.6" ry=".9" fill="#eee"/></svg>
<div style="left:600px;top:454px;width:590px;height:20px;border:1px solid #ababab;background:#fff;"></div>
<div style="left:1175px;top:456px;width:13px;height:16px;border:1px solid #acacac;background:linear-gradient(#f2f2f2,#e4e4e4)"></div>
<svg style="left:1175px;top:456px;" width="15" height="18" viewBox="0 0 15 18"><path d="M4.0 7.0 L7.5 10.6 L11.0 7.0" fill="none" stroke="#555" stroke-width="1.4"/></svg>
<div style="left:600px;top:480px;width:590px;height:20px;border:1px solid #dcdcdc;background:#fff;"></div>
<div style="left:1175px;top:482px;width:13px;height:16px;border:1px solid #d9d9d9;background:linear-gradient(#f2f2f2,#e4e4e4)"></div>
<svg style="left:1175px;top:482px;" width="15" height="18" viewBox="0 0 15 18"><path d="M4.0 7.0 L7.5 10.6 L11.0 7.0" fill="none" stroke="#c8c8c8" stroke-width="1.4"/></svg>
<div style="left:600px;top:506px;width:590px;height:20px;border:1px solid #dcdcdc;background:#fff;"></div>
<div style="left:1175px;top:508px;width:13px;height:16px;border:1px solid #d9d9d9;background:linear-gradient(#f2f2f2,#e4e4e4)"></div>
<svg style="left:1175px;top:508px;" width="15" height="18" viewBox="0 0 15 18"><path d="M4.0 7.0 L7.5 10.6 L11.0 7.0" fill="none" stroke="#c8c8c8" stroke-width="1.4"/></svg>
<div style="left:344px;top:759px;width:98px;height:20px;border:1px solid #d9d9d9;background:#f4f4f4"></div>
<svg style="left:361.4px;top:762.4px;opacity:0.7;" width="15.2" height="15.2" viewBox="0 0 15.2 15.2"><defs><linearGradient id="g3690_7700" x1="0" y1="0" x2="0" y2="1"><stop offset="0" stop-color="#a8dca0"/><stop offset="1" stop-color="#7cc474"/></linearGradient></defs><circle cx="7.6" cy="7.6" r="6.35" fill="#ececec" stroke="#c8c8c8" stroke-width="1.1"/><circle cx="7.6" cy="7.6" r="3.96" fill="url(#g3690_7700)" stroke="#7cc474" stroke-width=".6"/><path d="M3.84 7.6 L7.60 4.59 V6.47 H11.36 V8.73 H7.60 V10.61Z" fill="#fff"/></svg>
<span class="t" style="left:382px;top:764px;font-size:12px;line-height:14px;color:#9a9a9a;letter-spacing:-0.313px;">Previous</span>
<div style="left:448px;top:759px;width:78px;height:20px;border:1px solid #acacac;background:linear-gradient(#f1f1f1,#e2e2e2)"></div>
<svg style="left:465.4px;top:762.4px;" width="15.2" height="15.2" viewBox="0 0 15.2 15.2"><defs><linearGradient id="g4730_7700" x1="0" y1="0" x2="0" y2="1"><stop offset="0" stop-color="#58c04e"/><stop offset="1" stop-color="#2c9a26"/></linearGradient></defs><circle cx="7.6" cy="7.6" r="6.35" fill="#ececec" stroke="#888" stroke-width="1.1"/><circle cx="7.6" cy="7.6" r="3.96" fill="url(#g4730_7700)" stroke="#2c9a26" stroke-width=".6"/><path d="M11.36 7.6 L7.60 4.59 V6.47 H3.84 V8.73 H7.60 V10.61Z" fill="#fff"/></svg>
<span class="t" style="left:486px;top:764px;font-size:12px;line-height:14px;color:#222;letter-spacing:0.109px;">Next</span>
<div style="left:1050px;top:757px;width:73px;height:21px;border:1px solid #acacac;background:linear-gradient(#f1f1f1,#e4e4e4)"></div>
<span class="t" style="left:1079.0px;top:762px;font-size:12px;line-height:14px;color:#222;letter-spacing:-0.338px;">OK</span>
<div style="left:1135px;top:757px;width:73px;height:21px;border:1px solid #acacac;background:linear-gradient(#f1f1f1,#e4e4e4)"></div>
<span class="t" style="left:1155.0px;top:762px;font-size:12px;line-height:14px;color:#222;letter-spacing:-0.371px;">Cancel</span>
<div style="left:339px;top:235px;width:656px;height:496px;background:#1a2f3e"></div>
<div style="left:344px;top:285px;width:646px;height:441px;background:#fff"></div>
<span class="t" style="left:349.5px;top:259px;font-size:16.6px;line-height:19px;color:#fff;letter-spacing:-0.110px;">Edit Color Palettes</span>
<div style="left:919px;top:269px;width:7px;height:2px;background:#f0f0f0"></div>
<div style="left:939px;top:264px;width:7px;height:4px;border:1px solid #f0f0f0;border-top-width:2px"></div>
<svg style="left:960px;top:263px;" width="9" height="9" viewBox="0 0 9 9"><path d="M1 1 L8 8 M8 1 L1 8" stroke="#f0f0f0" stroke-width="1.3"/></svg>
<span class="t" style="left:354.5px;top:300px;font-size:19px;line-height:21px;color:#5c5c5c;transform:scaleX(0.9182);transform-origin:0 0;">Color Palettes</span>
<div style="left:344px;top:331px;width:500px;height:1px;background:#ababab"></div>
<div style="left:356px;top:344px;width:620px;height:345px;border:1px solid #ababab;background:#fff;"></div>
<div style="left:357px;top:349px;width:620px;height:1px;background:#ababab"></div>
<svg style="left:361.4px;top:354.4px;" width="15.2" height="15.2" viewBox="0 0 15.2 15.2"><defs><linearGradient id="g3690_3620" x1="0" y1="0" x2="0" y2="1"><stop offset="0" stop-color="#58c04e"/><stop offset="1" stop-color="#2c9a26"/></linearGradient></defs><circle cx="7.6" cy="7.6" r="6.35" fill="#ececec" stroke="#808080" stroke-width="1.1"/><circle cx="7.6" cy="7.6" r="3.96" fill="url(#g3690_3620)" stroke="#2c9a26" stroke-width=".6"/><path d="M3.84 7.6 H11.36 M7.6 3.84 V11.36" stroke="#fff" stroke-width="2.00"/></svg>
<svg style="left:386px;top:355px;" width="13" height="15" viewBox="0 0 13 15"><rect x="4.4" y="1" width="7.4" height="10" fill="#dfe9f6" stroke="#6f88a8" stroke-width=".8"/><rect x="1.2" y="3.6" width="7.4" height="10" fill="#eef3fa" stroke="#6f88a8" stroke-width=".8"/></svg>
<svg style="left:407.4px;top:354.4px;" width="15.2" height="15.2" viewBox="0 0 15.2 15.2"><defs><linearGradient id="g4150_3620" x1="0" y1="0" x2="0" y2="1"><stop offset="0" stop-color="#e84a4a"/><stop offset="1" stop-color="#c01818"/></linearGradient></defs><circle cx="7.6" cy="7.6" r="6.35" fill="#ececec" stroke="#808080" stroke-width="1.1"/><circle cx="7.6" cy="7.6" r="3.96" fill="url(#g4150_3620)" stroke="#c01818" stroke-width=".6"/><rect x="3.84" y="6.40" width="7.52" height="2.40" fill="#fff" stroke="#b33" stroke-width=".4"/></svg>
<span class="t" style="left:367.5px;top:393px;font-size:12px;line-height:14px;color:#333;letter-spacing:-0.219px;">Palette Chooser</span>
<div style="left:470px;top:388px;width:473px;height:20px;border:1px solid #ababab;background:#fff;"></div>
<div style="left:928px;top:390px;width:13px;height:16px;border:1px solid #acacac;background:linear-gradient(#f2f2f2,#e4e4e4)"></div>
<svg style="left:928px;top:390px;" width="15" height="18" viewBox="0 0 15 18"><path d="M4.0 7.0 L7.5 10.6 L11.0 7.0" fill="none" stroke="#555" stroke-width="1.4"/></svg>
<div style="left:949px;top:388px;width:16px;height:16px;border:1px solid #acacac;background:linear-gradient(#f2f2f2,#e4e4e4)"></div>
<svg style="left:951px;top:390px;" width="13" height="14" viewBox="0 0 13 14"><rect x="1" y="3.4" width="8.6" height="9.6" fill="#e6eef8" stroke="#7f98b8" stroke-width=".8"/><path d="M3 10.4 H7.4" stroke="#9ab" stroke-width=".8"/><path d="M4.6 9.6 L5 7.6 L11.2 1 L12.4 2.2 L6.4 9Z" fill="#a8b4c4" stroke="#667" stroke-width=".4"/></svg>
<div style="left:367px;top:424px;width:598px;height:254px;border:1px solid #ababab;background:#fff;"></div>
<div style="left:368px;top:429px;width:598px;height:1px;background:#c8c8c8"></div>
<svg style="left:372.4px;top:434.4px;" width="15.2" height="15.2" viewBox="0 0 15.2 15.2"><defs><linearGradient id="g3800_4420" x1="0" y1="0" x2="0" y2="1"><stop offset="0" stop-color="#58c04e"/><stop offset="1" stop-color="#2c9a26"/></linearGradient></defs><circle cx="7.6" cy="7.6" r="6.35" fill="#ececec" stroke="#808080" stroke-width="1.1"/><circle cx="7.6" cy="7.6" r="3.96" fill="url(#g3800_4420)" stroke="#2c9a26" stroke-width=".6"/><path d="M3.84 7.6 H11.36 M7.6 3.84 V11.36" stroke="#fff" stroke-width="2.00"/></svg>
<svg style="left:397px;top:435px;" width="13" height="14" viewBox="0 0 13 14"><rect x="1" y="3.4" width="8.6" height="9.6" fill="#e6eef8" stroke="#7f98b8" stroke-width=".8"/><path d="M3 10.4 H7.4" stroke="#9ab" stroke-width=".8"/><path d="M4.6 9.6 L5 7.6 L11.2 1 L12.4 2.2 L6.4 9Z" fill="#a8b4c4" stroke="#667" stroke-width=".4"/></svg>
<svg style="left:418.4px;top:434.4px;" width="15.2" height="15.2" viewBox="0 0 15.2 15.2"><defs><linearGradient id="g4260_4420" x1="0" y1="0" x2="0" y2="1"><stop offset="0" stop-color="#e84a4a"/><stop offset="1" stop-color="#c01818"/></linearGradient></defs><circle cx="7.6" cy="7.6" r="6.35" fill="#ececec" stroke="#808080" stroke-width="1.1"/><circle cx="7.6" cy="7.6" r="3.96" fill="url(#g4260_4420)" stroke="#c01818" stroke-width=".6"/><rect x="3.84" y="6.40" width="7.52" height="2.40" fill="#fff" stroke="#b33" stroke-width=".4"/></svg>
<div style="left:368px;top:454px;width:598px;height:1px;background:#dcdcdc"></div>
<span class="t" style="left:373px;top:460px;font-size:12px;line-height:14px;color:#333;letter-spacing:-0.044px;">Color</span>
<span class="t" style="left:892px;top:460px;font-size:12px;line-height:14px;color:#333;letter-spacing:-0.507px;">Sequence</span>
<svg style="left:950px;top:462px;" width="11" height="8" viewBox="0 0 11 8"><path d="M0.8 6.8 L5.4 1.4 L10 6.8Z" fill="#666"/></svg>
<div style="left:368px;top:477px;width:598px;height:1px;background:#c8c8c8"></div>
<div style="left:965px;top:455px;width:1px;height:224px;background:#e0e0e0"></div>
<div style="left:368px;top:498px;width:597px;height:1px;background:#dcdcdc"></div>
<div style="left:379px;top:481px;width:12px;height:12px;border:1px solid #000;background:#00f6f6"></div>
<span class="t" style="left:954.5px;top:482px;font-size:12px;line-height:14px;color:#333;">1</span>
<div style="left:368px;top:519px;width:597px;height:1px;background:#dcdcdc"></div>
<div style="left:379px;top:502px;width:12px;height:12px;border:1px solid #000;background:#fff200"></div>
<span class="t" style="left:954.5px;top:503px;font-size:12px;line-height:14px;color:#333;">2</span>
<div style="left:368px;top:520px;width:597px;height:20px;background:#dddddd"></div>
<div style="left:368px;top:540px;width:597px;height:1px;background:#dcdcdc"></div>
<div style="left:379px;top:523px;width:12px;height:12px;border:1px solid #000;background:#00fc00"></div>
<span class="t" style="left:954.5px;top:524px;font-size:12px;line-height:14px;color:#333;">3</span>
<div style="left:368px;top:561px;width:597px;height:1px;background:#dcdcdc"></div>
<div style="left:379px;top:544px;width:12px;height:12px;border:1px solid #000;background:#ff6000"></div>
<span class="t" style="left:954.5px;top:545px;font-size:12px;line-height:14px;color:#333;">4</span>
<div style="left:368px;top:582px;width:597px;height:1px;background:#dcdcdc"></div>
<div style="left:379px;top:565px;width:12px;height:12px;border:1px solid #000;background:#0026ff"></div>
<span class="t" style="left:954.5px;top:566px;font-size:12px;line-height:14px;color:#333;">5</span>
<div style="left:368px;top:603px;width:597px;height:1px;background:#dcdcdc"></div>
<div style="left:379px;top:586px;width:12px;height:12px;border:1px solid #000;background:#f600f6"></div>
<span class="t" style="left:954.5px;top:587px;font-size:12px;line-height:14px;color:#333;">6</span>
<div style="left:820px;top:697px;width:73px;height:21px;border:1px solid #acacac;background:linear-gradient(#f1f1f1,#e4e4e4)"></div>
<span class="t" style="left:849.0px;top:702px;font-size:12px;line-height:14px;color:#222;letter-spacing:-0.338px;">OK</span>
<div style="left:905px;top:697px;width:73px;height:21px;border:1px solid #acacac;background:linear-gradient(#f1f1f1,#e4e4e4)"></div>
<span class="t" style="left:925.0px;top:702px;font-size:12px;line-height:14px;color:#222;letter-spacing:-0.371px;">Cancel</span>
<div style="left:441px;top:300px;width:451px;height:366px;background:#1a2f3e"></div>
<div style="left:446px;top:350px;width:441px;height:311px;background:#fff"></div>
<span class="t" style="left:451.5px;top:324px;font-size:16.6px;line-height:19px;color:#fff;letter-spacing:-0.207px;">Please Select a Color</span>
<div style="left:816px;top:334px;width:7px;height:2px;background:#f0f0f0"></div>
<div style="left:836px;top:329px;width:7px;height:4px;border:1px solid #f0f0f0;border-top-width:2px"></div>
<svg style="left:857px;top:328px;" width="9" height="9" viewBox="0 0 9 9"><path d="M1 1 L8 8 M8 1 L1 8" stroke="#f0f0f0" stroke-width="1.3"/></svg>
<div style="left:458px;top:362px;width:297px;height:223px;border:1px solid #8c8c8c;background:linear-gradient(to bottom,rgba(255,255,255,0.0000) 0.00%,rgba(239,239,239,0.0625) 6.25%,rgba(223,223,223,0.1250) 12.50%,rgba(207,207,207,0.1875) 18.75%,rgba(191,191,191,0.2500) 25.00%,rgba(175,175,175,0.3125) 31.25%,rgba(159,159,159,0.3750) 37.50%,rgba(143,143,143,0.4375) 43.75%,rgba(128,128,128,0.5000) 50.00%,rgba(112,112,112,0.5625) 56.25%,rgba(96,96,96,0.6250) 62.50%,rgba(80,80,80,0.6875) 68.75%,rgba(64,64,64,0.7500) 75.00%,rgba(48,48,48,0.8125) 81.25%,rgba(32,32,32,0.8750) 87.50%,rgba(16,16,16,0.9375) 93.75%,rgba(0,0,0,1.0000) 100.00%),linear-gradient(to right,#fff,#00fc32)"></div>
<div style="left:746px;top:363px;width:8px;height:1px;background:#48ff74"></div>
<div style="left:746px;top:364px;width:8px;height:2px;background:#3a6a4a"></div>
<div style="left:746px;top:366px;width:8px;height:1px;background:#e6ffe6"></div>
<div style="left:754px;top:367px;width:1px;height:9px;background:#b4ffc0"></div>
<div style="left:755px;top:367px;width:1px;height:9px;background:#3a6a4a"></div>
<div style="left:761px;top:362px;width:22px;height:223px;border:1px solid #8c8c8c;background:linear-gradient(to bottom,#f00 0%,#ff0 16.66%,#0f0 33.33%,#0ff 50%,#00f 66.66%,#f0f 83.33%,#f00 100%)"></div>
<svg style="left:762px;top:441px;" width="22" height="8" viewBox="0 0 22 8"><path d="M0 0 L4 4 L0 8Z" fill="#000"/><path d="M22 0 L18 4 L22 8Z" fill="#000"/></svg>
<div style="left:790px;top:362px;width:83px;height:20px;border:1px solid #ababab;background:#fff;"></div>
<span class="t" style="left:795.5px;top:367px;font-size:12px;line-height:14px;color:#333;transform:scaleX(0.8268);transform-origin:0 0;">RGB</span>
<div style="left:858px;top:364px;width:13px;height:16px;border:1px solid #acacac;background:linear-gradient(#f2f2f2,#e4e4e4)"></div>
<svg style="left:858px;top:364px;" width="15" height="18" viewBox="0 0 15 18"><path d="M4.0 7.0 L7.5 10.6 L11.0 7.0" fill="none" stroke="#555" stroke-width="1.4"/></svg>
<span class="t" style="left:790.5px;top:393px;font-size:12px;line-height:14px;color:#333;transform:scaleX(0.7750);transform-origin:0 0;">R:</span>
<div style="left:810px;top:388px;width:63px;height:20px;border:1px solid #ababab;background:#fff;"></div>
<span class="t" style="right:463px;top:393px;font-size:12px;line-height:14px;color:#333;">0</span>
<span class="t" style="left:790.5px;top:419px;font-size:12px;line-height:14px;color:#333;transform:scaleX(0.7341);transform-origin:0 0;">G:</span>
<div style="left:810px;top:414px;width:63px;height:20px;border:1px solid #ababab;background:#fff;"></div>
<span class="t" style="right:463px;top:419px;font-size:12px;line-height:14px;color:#333;">252</span>
<span class="t" style="left:790.5px;top:445px;font-size:12px;line-height:14px;color:#333;transform:scaleX(0.8203);transform-origin:0 0;">B:</span>
<div style="left:810px;top:440px;width:63px;height:20px;border:1px solid #ababab;background:#fff;"></div>
<span class="t" style="right:463px;top:445px;font-size:12px;line-height:14px;color:#333;">50</span>
<span class="t" style="left:790.5px;top:471px;font-size:12px;line-height:14px;color:#333;transform:scaleX(0.8203);transform-origin:0 0;">A:</span>
<div style="left:810px;top:466px;width:63px;height:20px;border:1px solid #ababab;background:#fff;"></div>
<span class="t" style="right:463px;top:471px;font-size:12px;line-height:14px;color:#333;">255</span>
<div style="left:458px;top:591px;width:297px;height:20px;border:1px solid #b4b4b4;background:#00fc32"></div>
<div style="left:761px;top:591px;width:22px;height:20px;border:1px solid #acacac;background:linear-gradient(#f2f2f2,#e4e4e4)"></div>
<svg style="left:764px;top:594px;" width="18" height="16" viewBox="0 0 18 16"><path d="M2.6 14.4 L3.6 11.6 L9.8 5.4 L11.6 7.2 L5.4 13.4Z" fill="#777" stroke="#444" stroke-width=".5"/><path d="M9 4 L13 8" stroke="#222" stroke-width="1.7"/><circle cx="12.8" cy="4.2" r="2.5" fill="#222"/></svg>
<div style="left:790px;top:592px;width:83px;height:20px;border:1px solid #ababab;background:#fff;"></div>
<span class="t" style="left:795.5px;top:597px;font-size:12px;line-height:14px;color:#333;transform:scaleX(0.9059);transform-origin:0 0;">#FF00FC32</span>
<div style="left:717px;top:632px;width:73px;height:21px;border:1px solid #acacac;background:linear-gradient(#f1f1f1,#e4e4e4)"></div>
<span class="t" style="left:746.0px;top:637px;font-size:12px;line-height:14px;color:#222;letter-spacing:-0.338px;">OK</span>
<div style="left:802px;top:632px;width:73px;height:21px;border:1px solid #7eb4ea;background:linear-gradient(#eef5fc,#daeafa)"></div>
<span class="t" style="left:822.0px;top:637px;font-size:12px;line-height:14px;color:#222;letter-spacing:-0.371px;">Cancel</span>
</body></html>
